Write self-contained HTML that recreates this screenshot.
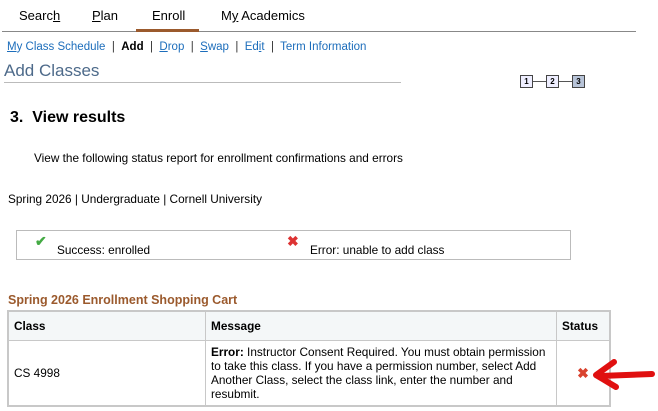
<!DOCTYPE html>
<html><head><style>
body{margin:0;width:658px;height:411px;background:#fff;font-family:"Liberation Sans",Arial,sans-serif;position:relative;overflow:hidden;color:#000}
.a{position:absolute;white-space:nowrap}
.tab{font-size:13px;top:8px}
.lnk{color:#1c6dbb}
.sep{color:#333}
u{text-decoration:underline}
.box{position:absolute;width:11px;height:11px;border:1px solid #444;background:#eef;font-size:8px;text-align:center;line-height:11px;font-weight:bold}
table{position:absolute;left:7px;top:310px;width:604px;border-collapse:collapse;font-size:11.8px}
td,th{border:1px solid #c8c8c8;padding:4px 5px;text-align:left;vertical-align:middle}
th{background:#f4f7f8;height:20px}
table{border:2px solid #c8c8c8}
</style></head><body>
<div class="a tab" style="left:19px">Searc<u>h</u></div>
<div class="a tab" style="left:92px"><u>P</u>lan</div>
<div class="a tab" style="left:152px">Enroll</div>
<div class="a tab" style="left:221px">M<u>y</u> Academics</div>
<div class="a" style="left:2px;top:31px;width:634px;height:1px;background:#888"></div>
<div class="a" style="left:136px;top:29px;width:63px;height:3px;background:#9b5a2d"></div>
<div class="a" style="left:7px;top:41px;font-size:11.5px"><span class="lnk"><u>M</u>y Class Schedule</span> <span class="sep">&nbsp;|&nbsp;</span> <b>Add</b> <span class="sep">&nbsp;|&nbsp;</span> <span class="lnk"><u>D</u>rop</span> <span class="sep">&nbsp;|&nbsp;</span> <span class="lnk"><u>S</u>wap</span> <span class="sep">&nbsp;|&nbsp;</span> <span class="lnk">Ed<u>i</u>t</span> <span class="sep">&nbsp;|&nbsp;</span> <span class="lnk">Term Information</span></div>
<div class="a" style="left:4px;top:61px;font-size:17px;color:#4d6a8a">Add Classes</div>
<div class="a" style="left:4px;top:82px;width:397px;height:1px;background:#bbb"></div>
<div class="box" style="left:520px;top:75px">1</div>
<div class="a" style="left:533px;top:81px;width:13px;height:1px;background:#555"></div>
<div class="box" style="left:546px;top:75px">2</div>
<div class="a" style="left:559px;top:81px;width:13px;height:1px;background:#555"></div>
<div class="box" style="left:572px;top:75px;background:#b8c4d8">3</div>
<div class="a" style="left:10px;top:109px;font-size:16px;font-weight:bold">3.&nbsp; View results</div>
<div class="a" style="left:34px;top:151px;font-size:11.8px">View the following status report for enrollment confirmations and errors</div>
<div class="a" style="left:8px;top:192px;font-size:11.8px">Spring 2026 | Undergraduate | Cornell University</div>
<div class="a" style="left:16px;top:230px;width:553px;height:28px;border:1px solid #bbb"></div>
<div class="a" style="left:35px;top:233px;font-size:14px;color:#4a4;font-weight:bold">✔</div>
<div class="a" style="left:57px;top:243px;font-size:11.8px">Success: enrolled</div>
<div class="a" style="left:287px;top:233px;font-size:14px;color:#d33;font-weight:bold">✖</div>
<div class="a" style="left:310px;top:243px;font-size:11.8px">Error: unable to add class</div>
<div class="a" style="left:8px;top:293px;font-size:12.5px;font-weight:bold;color:#9b5a2d">Spring 2026 Enrollment Shopping Cart</div>
<table>
<tr><th style="width:186px">Class</th><th style="width:340px">Message</th><th>Status</th></tr>
<tr style="height:64px"><td>CS 4998</td><td style="line-height:14px;padding-right:8px"><b>Error:</b> Instructor Consent Required. You must obtain permission<br>to take this class. If you have a permission number, select Add<br>Another Class, select the class link, enter the number and<br>resubmit.</td><td style="text-align:center;color:#d9432f;font-size:14px;font-weight:bold">✖</td></tr>
</table>
<svg class="a" style="left:590px;top:356px" width="66" height="36" viewBox="0 0 66 36"><path d="M62 18 L10 20 M24 6 L6 19 L26 31" stroke="#e01010" stroke-width="6" fill="none" stroke-linecap="round" stroke-linejoin="round"/></svg>
</body></html>
